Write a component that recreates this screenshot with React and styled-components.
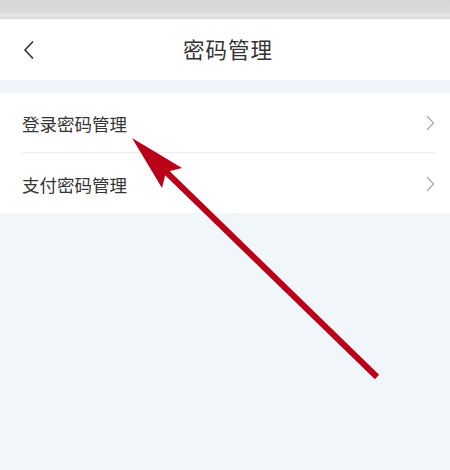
import React from 'react'
import styled, { createGlobalStyle } from 'styled-components'

const GlobalStyle = createGlobalStyle`
  html, body {
    margin: 0;
    padding: 0;
    background: #f1f6fa;
  }
  body {
    font-family: "Liberation Sans", "Noto Sans CJK SC", sans-serif;
  }
`

const Page = styled.div`
  position: relative;
  width: 450px;
  height: 470px;
  overflow: hidden;
  background: #f1f6fa;
  display: flex;
  flex-direction: column;
`

const StatusBar = styled.div`
  height: 19px;
  background: linear-gradient(180deg, #d6d6d6 0%, #dadada 65%, #e6e6e6 80%, #dcdcdc 100%);
`

const Header = styled.div`
  height: 61px;
  background: #fff;
  display: flex;
  align-items: center;
  justify-content: center;
  position: relative;
`

const BackButton = styled.div`
  position: absolute;
  left: 22px;
  top: 21px;
  width: 14px;
  height: 20px;
  display: flex;
`

const Title = styled.div`
  font-family: "Noto Sans CJK SC", sans-serif;
  font-size: 21.5px;
  color: #333;
  letter-spacing: 1px;
  margin: -2px 0 0 6px;
`

const Band = styled.div`
  height: 13px;
  background: linear-gradient(180deg, #eef5fa, #f0f5f9);
`

const List = styled.div`
  background: #fff;
  display: flex;
  flex-direction: column;
`

const Row = styled.div`
  height: 60px;
  margin: 0 15px 0 22px;
  display: flex;
  align-items: center;
  justify-content: space-between;
  border-bottom: ${(p) => (p.last ? 'none' : '1px solid #ececec')};
  box-sizing: border-box;
`

const RowLabel = styled.span`
  font-family: "Noto Sans CJK SC", sans-serif;
  font-size: 17.5px;
  color: #353535;
  margin-top: ${(p) => p.shift}px;
`

const Chevron = styled.svg`
  width: 10px;
  height: 16px;
  margin-top: ${(p) => p.shift}px;
`

const Arrow = styled.svg`
  position: absolute;
  left: 0;
  top: 0;
  width: 450px;
  height: 470px;
  pointer-events: none;
`

const rows = [
  { label: '登录密码管理', shift: 1 },
  { label: '支付密码管理', shift: 2 },
]

export default function App() {
  return (
    <>
      <GlobalStyle />
      <Page>
        <StatusBar />
        <Header>
          <BackButton>
            <svg width="14" height="20" viewBox="0 0 14 20">
              <path d="M11 1.5 L3 10 L11 18.5" fill="none" stroke="#333" strokeWidth="1.6" />
            </svg>
          </BackButton>
          <Title>密码管理</Title>
        </Header>
        <Band />
        <List>
          {rows.map((r, idx) => (
            <Row key={r.label} last={idx === rows.length - 1}>
              <RowLabel shift={r.shift}>{r.label}</RowLabel>
              <Chevron shift={r.shift} viewBox="0 0 10 16">
                <path d="M2 1 L8.5 8 L2 15" fill="none" stroke="#a8a8a8" strokeWidth="1.2" />
              </Chevron>
            </Row>
          ))}
        </List>
        <Arrow viewBox="0 0 450 470">
          <line x1="377" y1="377" x2="160" y2="166" stroke="#ba0019" strokeWidth="6" strokeLinecap="butt" />
          <polygon points="132,138 182,168 166,172 162,188" fill="#ba0019" />
        </Arrow>
      </Page>
    </>
  )
}
